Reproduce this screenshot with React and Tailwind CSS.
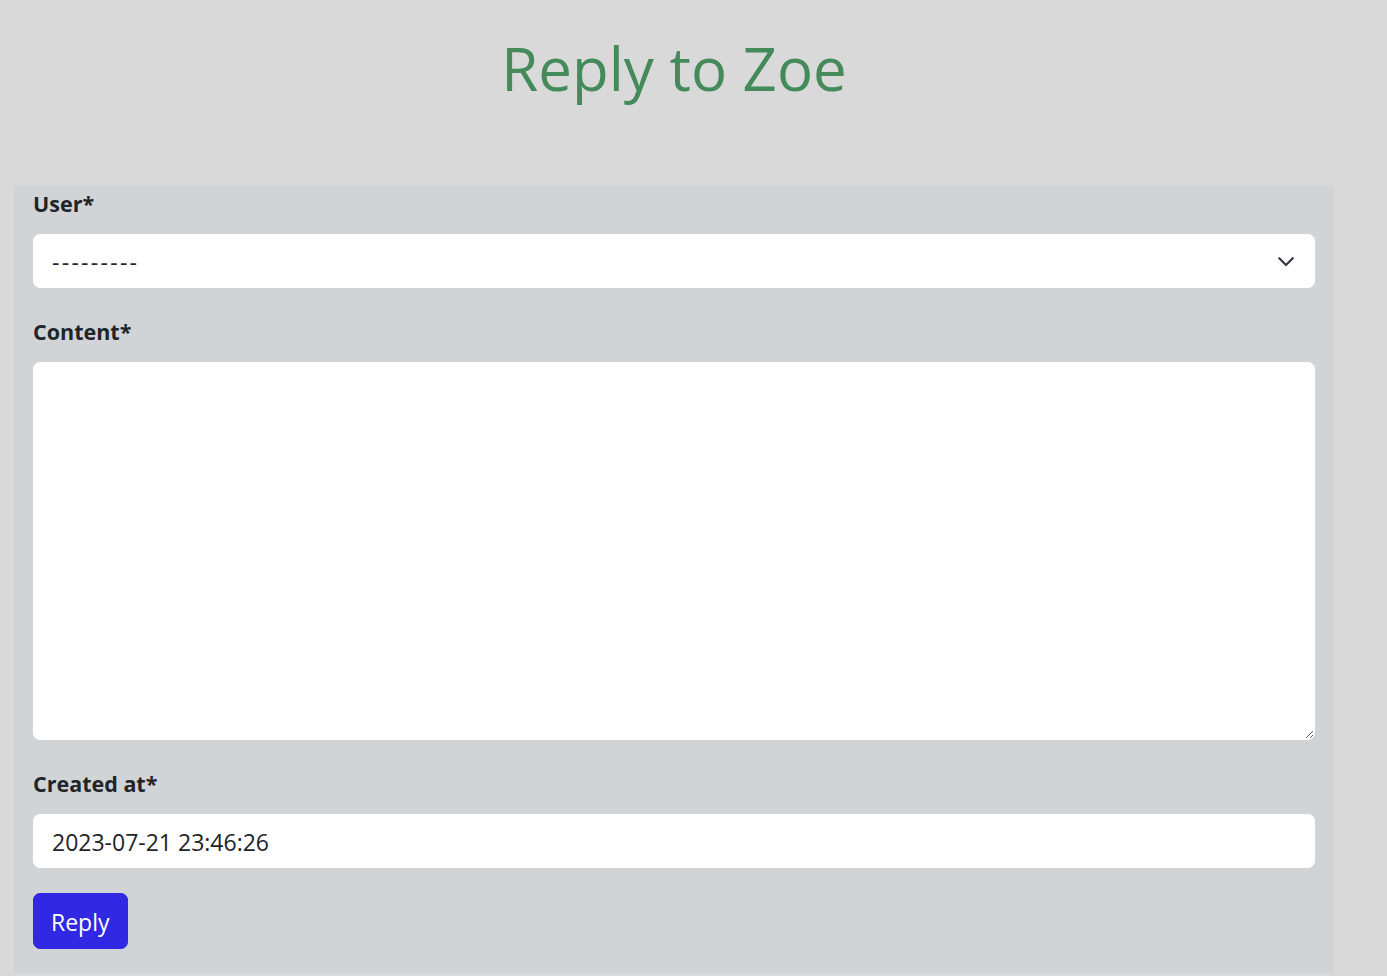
import React from "react";

const font = { fontFamily: '"Open Sans", "Noto Sans", sans-serif' };

function Label({ children }) {
  return (
    <label className="block mb-[17px] text-[21.5px] leading-[26px] font-bold text-[#212529]">
      {children}
    </label>
  );
}

export default function App() {
  return (
    <div className="min-h-[976px] bg-[#d9d9d9]" style={font}>
      <div className="ml-[14px] w-[1320px]">
        <div className="h-[185px] pt-[32px]">
          <h1 className="text-center text-[60px] leading-[72px] font-normal text-[#458a5a]">
            Reply to Zoe
          </h1>
        </div>
        <form
          className="bg-[#d1d4d6] px-[19px] pt-[6px] pb-[24px] flex flex-col"
          onSubmit={(e) => e.preventDefault()}
        >
          <div>
            <Label>User*</Label>
            <div className="relative">
              <select className="appearance-none block w-full h-[54px] bg-white border border-white rounded-[7px] pl-[18px] pr-[54px] pt-[3px] text-[23px] tracking-[2.3px] text-[#212529] outline-none">
                <option>---------</option>
              </select>
              <svg
                className="absolute right-[20px] top-[20px] pointer-events-none"
                width="18"
                height="14"
                viewBox="0 1.5 16 12"
              >
                <path
                  d="m2 5 6 6 6-6"
                  fill="none"
                  stroke="#343a40"
                  strokeWidth="2"
                  strokeLinecap="round"
                  strokeLinejoin="round"
                />
              </svg>
            </div>
          </div>
          <div className="mt-[31px]">
            <Label>Content*</Label>
            <textarea className="block w-full h-[378px] bg-white border border-white rounded-[7px] px-[18px] py-[9px] text-[23px] text-[#212529] outline-none" />
          </div>
          <div className="mt-[31px]">
            <Label>Created at*</Label>
            <input
              className="block w-full h-[54px] bg-white border border-white rounded-[7px] px-[18px] pt-[2px] text-[23px] text-[#212529] outline-none"
              defaultValue="2023-07-21 23:46:26"
            />
          </div>
          <div className="mt-[25px]">
            <button
              type="submit"
              className="h-[56px] px-[17px] pt-[2px] bg-[#3028e2] text-white text-[23px] rounded-[7px] border border-[#3028e2]"
            >
              Reply
            </button>
          </div>
        </form>
      </div>
    </div>
  );
}
